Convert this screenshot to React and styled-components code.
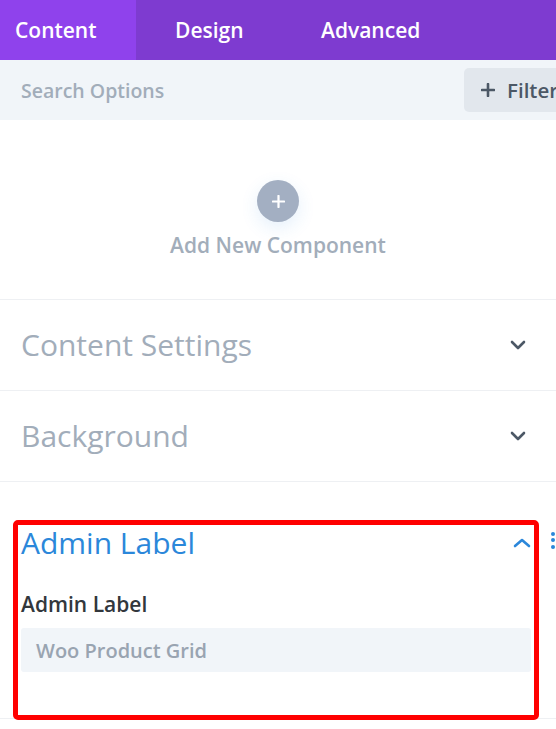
import React from 'react';
import styled, { createGlobalStyle } from 'styled-components';

const GlobalStyle = createGlobalStyle`
	html, body {
		margin: 0;
		padding: 0;
		background: #ffffff;
	}
	body {
		font-family: 'Open Sans', 'Liberation Sans', sans-serif;
		-webkit-font-smoothing: antialiased;
	}
	* {
		box-sizing: border-box;
	}
`;

const tabs = [
	{ label: 'Content', active: true, width: 136, pad: 15 },
	{ label: 'Design', width: 146, pad: 39 },
	{ label: 'Advanced', pad: 39 },
];

const toggles = ['Content Settings', 'Background'];

const ChevronDown = ({ color = '#4c5866' }) => (
	<svg width="16" height="10" viewBox="0 0 16 10" fill="none">
		<path
			d="M2 2 L8 8 L14 2"
			stroke={color}
			strokeWidth="2.6"
			strokeLinecap="round"
			strokeLinejoin="round"
		/>
	</svg>
);

const ChevronUp = ({ color = '#2b87da' }) => (
	<svg width="18" height="10" viewBox="0 0 18 10" fill="none">
		<path
			d="M2 8 L9 2 L16 8"
			stroke={color}
			strokeWidth="2.6"
			strokeLinecap="round"
			strokeLinejoin="round"
		/>
	</svg>
);

const PlusIcon = ({ size = 14, color = '#fff', width = 2.4 }) => (
	<svg width={size} height={size} viewBox="0 0 14 14" fill="none">
		<path d="M7 1 V13 M1 7 H13" stroke={color} strokeWidth={width} strokeLinecap="round" />
	</svg>
);

const App = () => {
	return (
		<>
			<GlobalStyle />
			<Panel>
				<TabBar>
					{tabs.map((tab) => (
						<Tab key={tab.label} $active={tab.active} $width={tab.width} $pad={tab.pad}>
							{tab.label}
						</Tab>
					))}
				</TabBar>

				<SearchRow>
					<SearchInput>Search Options</SearchInput>
					<FilterButton>
						<PlusIcon size={14} color="#4c5866" width={2.6} />
						Filter
					</FilterButton>
				</SearchRow>

				<AddComponent>
					<AddCircle>
						<PlusIcon size={13} width={2.4} />
					</AddCircle>
					<AddText>Add New Component</AddText>
				</AddComponent>

				{toggles.map((title) => (
					<ToggleRow key={title}>
						<ToggleTitle>{title}</ToggleTitle>
						<ChevronDown />
					</ToggleRow>
				))}

				<OpenToggle>
					<OpenHeader>
						<ToggleTitle $open>Admin Label</ToggleTitle>
						<ChevronUp />
						<Dots>
							<span />
							<span />
							<span />
						</Dots>
					</OpenHeader>
					<FieldLabel>Admin Label</FieldLabel>
					<FieldInput>Woo Product Grid</FieldInput>
					<Highlight />
				</OpenToggle>
			</Panel>
		</>
	);
};

const Panel = styled.div`
	width: 556px;
	min-height: 729px;
	overflow: hidden;
	background: #fff;
`;

const TabBar = styled.div`
	display: flex;
	height: 60px;
	background: #7e3bd0;
`;

const Tab = styled.div`
	display: flex;
	align-items: center;
	flex-shrink: 0;
	width: ${(p) => (p.$width ? `${p.$width}px` : 'auto')};
	padding-left: ${(p) => p.$pad}px;
	background: ${(p) => (p.$active ? '#8f42ec' : 'transparent')};
	color: #fff;
	font-size: 21px;
	font-weight: 600;
`;

const SearchRow = styled.div`
	display: flex;
	align-items: center;
	height: 60px;
	padding-left: 21px;
	background: #f1f5f9;
`;

const SearchInput = styled.div`
	flex: 1;
	color: #a2adba;
	font-size: 19.5px;
	font-weight: 600;
`;

const FilterButton = styled.div`
	display: flex;
	align-items: center;
	gap: 12px;
	flex-shrink: 0;
	width: 120px;
	height: 44px;
	margin-right: -28px;
	padding-left: 17px;
	border-radius: 5px;
	background: #e2e7ed;
	color: #4c5866;
	font-size: 20.5px;
	font-weight: 600;
`;

const AddComponent = styled.div`
	display: flex;
	flex-direction: column;
	align-items: center;
	padding: 60px 0 40px;
	border-bottom: 1px solid #eef0f3;
`;

const AddCircle = styled.div`
	display: flex;
	align-items: center;
	justify-content: center;
	width: 42px;
	height: 42px;
	border-radius: 50%;
	background: #a3afc2;
	box-shadow: 0 6px 18px rgba(43, 135, 218, 0.12);
`;

const AddText = styled.div`
	margin-top: 9px;
	line-height: 28px;
	color: #a2adba;
	font-size: 21px;
	font-weight: 600;
`;

const ToggleRow = styled.div`
	display: flex;
	align-items: center;
	justify-content: space-between;
	padding: 26px 30px 26px 21px;
	border-bottom: 1px solid #eef0f3;
`;

const ToggleTitle = styled.div`
	flex: 1;
	line-height: 38px;
	color: ${(p) => (p.$open ? '#2b87da' : '#a2adba')};
	font-size: 30px;
	font-weight: 400;
`;

const OpenToggle = styled.div`
	position: relative;
	padding: 42px 0 46px 21px;
	border-bottom: 1px solid #eef0f3;
`;

const OpenHeader = styled.div`
	display: flex;
	align-items: center;
	gap: 20px;
	padding-right: 1px;
`;

const Dots = styled.div`
	display: flex;
	flex-direction: column;
	gap: 2.5px;
	margin-top: -6px;

	span {
		display: block;
		width: 4px;
		height: 4px;
		border-radius: 50%;
		background: #2b87da;
	}
`;

const FieldLabel = styled.div`
	margin-top: 29px;
	line-height: 26px;
	color: #32373c;
	font-size: 21px;
	font-weight: 600;
`;

const FieldInput = styled.div`
	display: flex;
	align-items: center;
	width: 510px;
	height: 44px;
	margin-top: 11px;
	padding-left: 15px;
	border-radius: 3px;
	background: #f1f5f9;
	color: #99a4b1;
	font-size: 20px;
	font-weight: 600;
`;

const Highlight = styled.div`
	position: absolute;
	top: 38px;
	left: 13px;
	width: 526px;
	height: 200px;
	border: 5px solid #ff0000;
	border-radius: 5px;
	pointer-events: none;
	z-index: 2;
`;

export default App;
